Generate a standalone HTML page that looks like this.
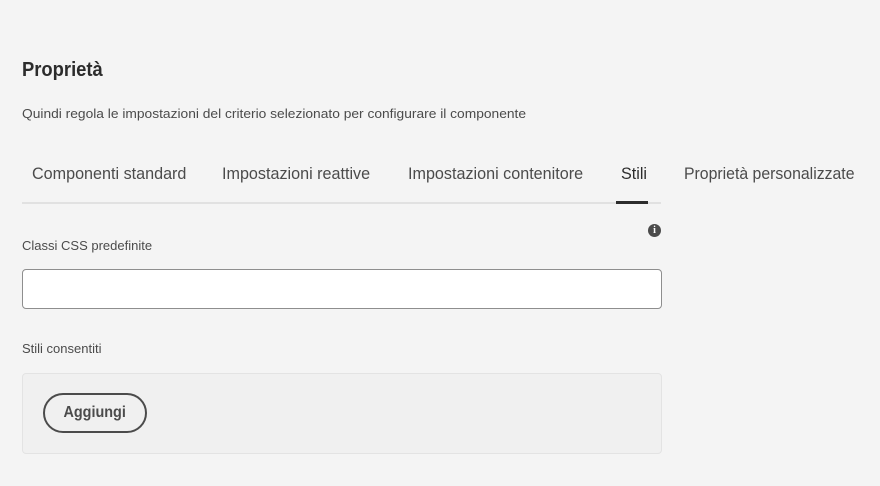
<!DOCTYPE html>
<html><head><meta charset="utf-8"><style>
body{margin:0;width:880px;height:486px;background:#f4f4f4;font-family:"Liberation Sans",sans-serif;color:#2c2c2c;position:relative;overflow:hidden}
.a{position:absolute;white-space:nowrap;transform-origin:left center}
.tab{font-size:17px;color:#4b4b4b;top:164px;transform:scaleX(0.95)}
</style></head><body>
<div class="a" style="left:22px;top:59px;font-size:20px;font-weight:bold;transform:scaleX(0.92)">Proprietà</div>
<div class="a" style="left:22px;top:106px;font-size:13px;color:#4b4b4b;transform:scaleX(1.06)">Quindi regola le impostazioni del criterio selezionato per configurare il componente</div>
<div class="a tab" style="left:32px">Componenti standard</div>
<div class="a tab" style="left:222px">Impostazioni reattive</div>
<div class="a tab" style="left:408px">Impostazioni contenitore</div>
<div class="a tab" style="left:621px;color:#2c2c2c">Stili</div>
<div class="a tab" style="left:684px;transform:scaleX(0.93)">Proprietà personalizzate</div>
<div class="a" style="left:22px;top:202px;width:639px;height:2px;background:#e1e1e1"></div>
<div class="a" style="left:616px;top:201px;width:32px;height:3px;background:#2c2c2c"></div>
<div class="a" style="left:648px;top:224px;width:13px;height:13px;border-radius:50%;background:#4b4b4b;color:#fff;font-size:10px;font-weight:bold;text-align:center;line-height:13px;font-family:'Liberation Serif',serif">i</div>
<div class="a" style="left:22px;top:238px;font-size:13px;color:#4b4b4b">Classi CSS predefinite</div>
<div class="a" style="left:22px;top:269px;width:638px;height:38px;background:#fff;border:1px solid #8e8e8e;border-radius:4px"></div>
<div class="a" style="left:22px;top:341px;font-size:13px;color:#4b4b4b">Stili consentiti</div>
<div class="a" style="left:22px;top:373px;width:638px;height:79px;background:#f0f0f0;border:1px solid #e3e3e3;border-radius:4px"></div>
<div class="a" style="left:43px;top:393px;width:100px;height:36px;border:2px solid #4b4b4b;border-radius:20px;font-size:16px;font-weight:bold;color:#4b4b4b;text-align:center;line-height:36px"><span style="display:inline-block;transform:scaleX(0.9)">Aggiungi</span></div>
</body></html>
